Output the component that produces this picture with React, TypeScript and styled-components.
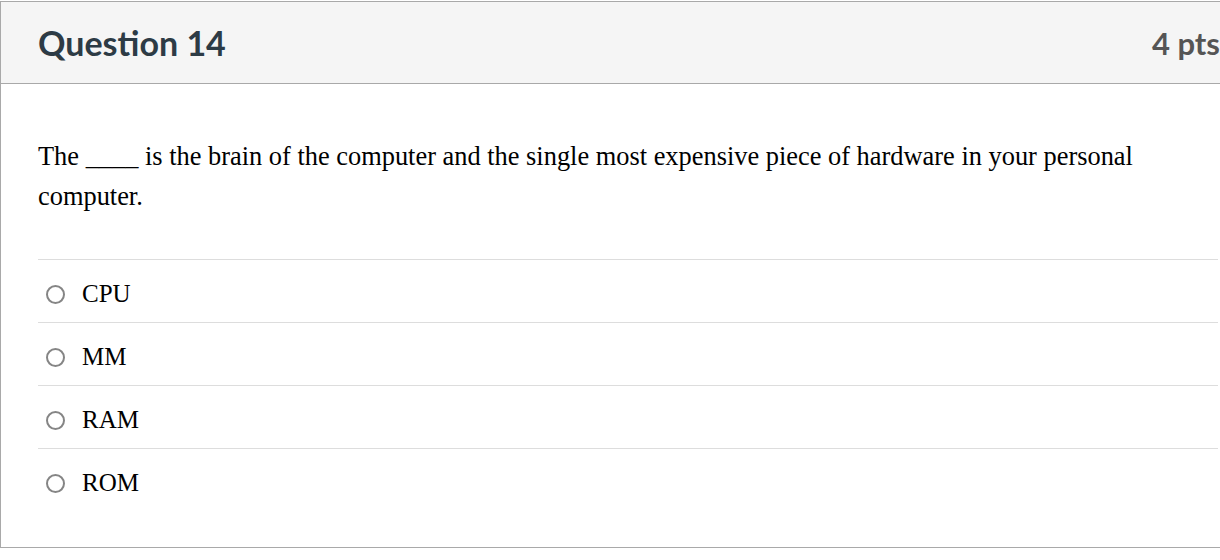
import styled, { createGlobalStyle } from "styled-components";

const answers = ["CPU", "MM", "RAM", "ROM"];

const GlobalStyle = createGlobalStyle`
  body {
    margin: 0;
    background: #ffffff;
    overflow: hidden;
  }
`;

function App() {
  return (
    <>
      <GlobalStyle />
      <StPage>
        <StCard>
          <StHeader>
            <StTitle>Question 14</StTitle>
            <StPoints>4 pts</StPoints>
          </StHeader>
          <StBody>
            <StQuestionText>
              The ____ is the brain of the computer and the single most
              expensive piece of hardware in your personal computer.
            </StQuestionText>
            <StAnswers>
              {answers.map((answer) => (
                <StAnswerRow key={answer}>
                  <StRadio />
                  <StAnswerLabel>{answer}</StAnswerLabel>
                </StAnswerRow>
              ))}
            </StAnswers>
          </StBody>
        </StCard>
      </StPage>
    </>
  );
}

const StPage = styled.div`
  padding-top: 1px;
  width: 1220px;
  overflow: hidden;
`;

const StCard = styled.div`
  width: 1240px;
  height: 547px;
  box-sizing: border-box;
  border: 1px solid #a9a9a9;
  background: #ffffff;
`;

const StHeader = styled.div`
  display: flex;
  align-items: center;
  justify-content: space-between;
  height: 81px;
  padding: 0 19px 0 37px;
  background: #f5f5f5;
  border-bottom: 1px solid #a9a9a9;
  font-family: Lato, "Liberation Sans", sans-serif;
  font-weight: bold;
`;

const StTitle = styled.h2`
  margin: 0;
  font-size: 34px;
  color: #2d3b45;
  font-weight: bold;
`;

const StPoints = styled.span`
  font-size: 31px;
  color: #555555;
`;

const StBody = styled.div`
  padding: 52px 21px 0 37px;
`;

const StQuestionText = styled.p`
  margin: 0 0 43px;
  font-family: "Liberation Serif", "Times New Roman", serif;
  font-size: 26.4px;
  line-height: 40px;
  color: #000000;
  padding-right: 60px;
`;

const StAnswers = styled.div`
  display: flex;
  flex-direction: column;
`;

const StAnswerRow = styled.div`
  display: flex;
  align-items: center;
  box-sizing: border-box;
  height: 63px;
  padding-top: 6px;
  border-top: 1px solid #dddddd;
`;

const StRadio = styled.span`
  width: 15px;
  height: 15px;
  margin-left: 8px;
  border: 2px solid #858585;
  border-radius: 50%;
  flex-shrink: 0;
`;

const StAnswerLabel = styled.span`
  margin-left: 17px;
  font-family: "Liberation Serif", "Times New Roman", serif;
  font-size: 25px;
  color: #000000;
`;

export default App;
